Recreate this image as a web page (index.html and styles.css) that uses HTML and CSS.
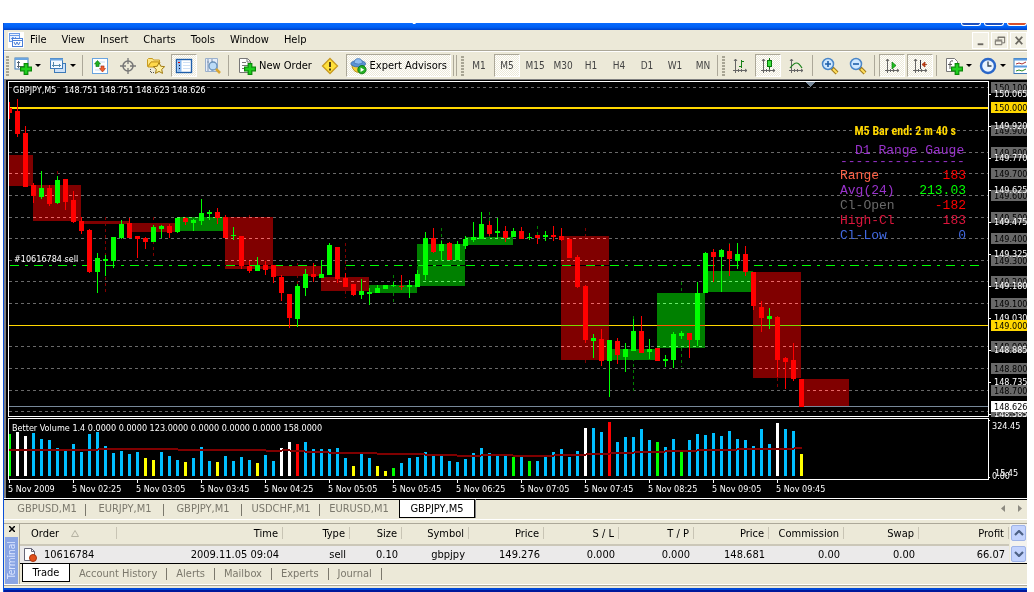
FILE: index.html
```html
<!DOCTYPE html>
<html lang="en">
<head>
<meta charset="utf-8">
<title>GBPJPY,M5</title>
<link rel="stylesheet" href="styles.css">
</head>
<body>
<svg class="defs" aria-hidden="true">
  <symbol id="plus" viewBox="0 0 10 10"><path d="M3.5 .5h3v3h3v3h-3v3h-3v-3h-3v-3h3z" fill="#1fd01f" stroke="#078a07"/></symbol>
  <symbol id="axes" viewBox="0 0 16 16"><path d="M3.5 1v14M1 12.5h14M2 3l1.500-2L5 3M13 11l2 1.500L13 14M6.500 11v3M9.500 11v3" fill="none" stroke="#666"/></symbol>
</svg>
<div class="window">
  <header class="title"><span class="title-text">[GBPJPY,M5]</span><i class="cap"></i><i class="cap"></i><i class="cap cap-close"></i></header>

  <nav class="menu">
    <svg class="menu-logo" viewBox="0 0 16 16"><rect width="16" height="16" fill="#fff"/><rect x="1.500" y="1.500" width="10" height="8" fill="#eaf2ff" stroke="#6a9be8"/><path d="M1 3.500h11M3 7l2-2 1 2 2-2" fill="none" stroke="#6a9be8"/><rect x="4.500" y="6.500" width="10" height="8" fill="#fff" stroke="#4a7fd8"/><path d="M4 8.500h11M6 10l1.500 3L9 10l1.500 3 1.500-3" fill="none" stroke="#4a7fd8"/></svg>
    <button>File</button><button>View</button><button>Insert</button><button>Charts</button><button>Tools</button><button>Window</button><button>Help</button>
    <span class="spacer"></span>
    <button class="mdi" aria-label="Minimize"><svg viewBox="0 0 16 16"><path d="M5 12h6" stroke="#6b6860" stroke-width="2"/></svg></button>
    <button class="mdi" aria-label="Restore"><svg viewBox="0 0 16 16"><path d="M6.500 7V4.500h7v6H11M6 4.500h8M3.500 8.500h7v4h-7zM3 7.500h8" fill="none" stroke="#6b6860"/></svg></button>
    <button class="mdi" aria-label="Close"><svg viewBox="0 0 16 16"><path d="M5 4l7 8M12 4l-7 8" stroke="#6b6860" stroke-width="2"/></svg></button>
  </nav>

  <div class="toolbar">
    <i class="grip"></i>
    <button class="drop" aria-label="New chart"><svg class="icon" viewBox="0 0 18 18"><rect x="1" y="1" width="13" height="11" fill="#fff" stroke="#3d7ab8"/><path d="M1 2h13" stroke="#6aa5e0" stroke-width="2"/><path d="M4.500 4v7M3 9.500h8M3 5.500h3" stroke="#567" fill="none"/><use href="#plus" x="6" y="6" width="12" height="12"/></svg><i class="caret"></i></button>
    <button class="drop profiles" aria-label="Profiles"><svg class="icon" viewBox="0 0 18 18"><rect x="5.500" y="6.500" width="11" height="9" fill="#cfe2f8" stroke="#3d7ab8"/><rect x="1.500" y="1.500" width="12" height="10" fill="#f4f9ff" stroke="#3d7ab8"/><path d="M1 2.500h13" stroke="#6aa5e0" stroke-width="2"/><path d="M4.500 5v5M3 8.500h9M10.500 7v3" stroke="#58a" fill="none"/></svg><i class="caret"></i></button>
    <i class="sep"></i>
    <button class="tool" aria-label="Market watch"><svg class="icon" viewBox="0 0 18 18"><rect x="1.500" y="1.500" width="15" height="15" fill="#fff" stroke="#6aa5e0"/><path d="M4 5h10M4 9h10M4 13h10" stroke="#c9dcf2"/><path d="M6.500 3.500l3 3.500H8v2.500H5V7H3.500z" fill="#20b020" stroke="#087808" stroke-width=".6"/><path d="M11.500 15l-3-3.500H10V9h3v2.500h1.500z" fill="#f06030" stroke="#b03010" stroke-width=".6"/></svg></button>
    <button class="tool" aria-label="Crosshair"><svg class="icon" viewBox="0 0 18 18"><circle cx="9" cy="9" r="5" fill="none" stroke="#777" stroke-width="1.500"/><path d="M9 1v6M9 11v6M1 9h6M11 9h6" stroke="#777" stroke-width="1.300"/></svg></button>
    <button class="tool" aria-label="Navigator"><svg class="icon" viewBox="0 0 18 18"><path d="M.500 9.500v-7l1-1h4l1 1.500h6v2H4z" fill="#ffe680" stroke="#c89b20"/><path d="M1 10l3-5h9l-2 5z" fill="#ffd94a" stroke="#c89b20"/><path d="M3.500 12v3.500H7" stroke="#555" stroke-dasharray="1 1" fill="none"/><path d="M12 5.500l1.700 3.700 3.900.5-2.900 2.700.8 4-3.500-2-3.500 2 .8-4-2.900-2.700 3.900-.5z" fill="#fff0a0" stroke="#a07a10"/></svg></button>
    <button class="tool on" aria-label="Terminal"><svg class="icon" viewBox="0 0 18 18"><rect x="1.500" y="2.500" width="15" height="13" fill="#fff" stroke="#1f5faa" stroke-width="1.400"/><path d="M4.500 3v12" stroke="#8dbcf0" stroke-width="4"/><path d="M8 5.500h7M8 8.500h7M8 11.500h7" stroke="#cfe0f5"/><path d="M4 5.500h1M4 8.500h1M4 11.500h1" stroke="#113"/><path d="M3 5.500h2" stroke="#d00"/></svg></button>
    <button class="tool" aria-label="Strategy tester"><svg class="icon" viewBox="0 0 18 18"><path d="M2.500 1.500h12v13h-12z" fill="#e6eefa" stroke="#9ab0cc"/><path d="M5 2v12M9 2v12M4 5h2M8 6l2-2" stroke="#7d93b0"/><circle cx="10" cy="9" r="4" fill="#bcdcf8" stroke="#6b93bb" stroke-width="1.300"/><path d="M13 12l4 4" stroke="#d8a530" stroke-width="2.500"/></svg></button>
    <i class="sep"></i>
    <button class="labelled"><svg class="icon" viewBox="0 0 18 18"><path d="M1.500 1.500h8l3 3v11h-11z" fill="#fff" stroke="#777"/><path d="M9 1.500V5h3.500M4 5.500h4M4 8.500h6M4 11.500h4" fill="none" stroke="#777"/><use href="#plus" x="6" y="6" width="12" height="12"/></svg>New Order</button>
    <button class="tool" aria-label="Warnings"><svg class="icon" viewBox="0 0 18 18"><path d="M9 1.500l7.500 7.500L9 16.500 1.500 9z" fill="#ffe13a" stroke="#c89a20" stroke-width="1.300"/><path d="M9 5v5M9 11.500v2" stroke="#554010" stroke-width="2"/></svg></button>
    <button class="labelled on experts"><svg class="icon" viewBox="0 0 18 18"><path d="M2 8q1 8 8 8 4 0 5-8z" fill="#f5cd38" stroke="#b08a18"/><ellipse cx="9" cy="6.500" rx="8" ry="3.500" fill="#5b93d3" stroke="#3c6fae"/><path d="M4.500 6q0-5 4.500-5t4.500 5q-4 2-9 0z" fill="#8fbdf0" stroke="#4a7dbb"/><circle cx="13" cy="13" r="4.500" fill="#25b025" stroke="#0b780b"/><path d="M11.500 10.500l4 2.500-4 2.500z" fill="#fff"/></svg>Expert Advisors</button>
    <i class="sep double"></i><i class="grip"></i>
    <button class="tool period">M1</button><button class="tool period on">M5</button><button class="tool period">M15</button><button class="tool period">M30</button><button class="tool period">H1</button><button class="tool period">H4</button><button class="tool period">D1</button><button class="tool period">W1</button><button class="tool period">MN</button>
    <i class="sep near"></i><i class="grip"></i>
    <button class="tool" aria-label="Bar chart"><svg class="icon" viewBox="0 0 16 16"><use href="#axes"/><path d="M9.500 2v8M7 8.500h2M10 3.500h2" stroke="#178017"/></svg></button>
    <button class="tool on" aria-label="Candlesticks"><svg class="icon" viewBox="0 0 16 16"><use href="#axes"/><path d="M9.500 0v11" stroke="#087808"/><rect x="7.500" y="2.500" width="4" height="6" fill="#3ee03e" stroke="#087808"/></svg></button>
    <button class="tool" aria-label="Line chart"><svg class="icon" viewBox="0 0 16 16"><use href="#axes"/><path d="M2 10q4-5 6.500-5T14 10" fill="none" stroke="#178017" stroke-width="1.200"/></svg></button>
    <i class="sep"></i>
    <button class="tool" aria-label="Zoom in"><svg class="icon" viewBox="0 0 18 18"><path d="M11 11l5 5" stroke="#a07a18" stroke-width="4"/><path d="M12 12l4 4" stroke="#ffdf60" stroke-width="2"/><circle cx="7" cy="7" r="5.500" fill="#cfe8ff" stroke="#4a86c8" stroke-width="1.500"/><path d="M4 7h6M7 4v6" stroke="#1f5faa" stroke-width="1.600"/></svg></button>
    <button class="tool" aria-label="Zoom out"><svg class="icon" viewBox="0 0 18 18"><path d="M11 11l5 5" stroke="#a07a18" stroke-width="4"/><path d="M12 12l4 4" stroke="#ffdf60" stroke-width="2"/><circle cx="7" cy="7" r="5.500" fill="#cfe8ff" stroke="#4a86c8" stroke-width="1.500"/><path d="M4 7h6" stroke="#1f5faa" stroke-width="1.600"/></svg></button>
    <i class="sep"></i>
    <button class="tool on" aria-label="Auto scroll"><svg class="icon" viewBox="0 0 16 16"><use href="#axes"/><path d="M8 4l4 3.500L8 11z" fill="#20c020" stroke="#087808" stroke-width=".7"/></svg></button>
    <button class="tool on" aria-label="Chart shift"><svg class="icon" viewBox="0 0 16 16"><use href="#axes"/><path d="M8.500 2v9" stroke="#334"/><path d="M15 6.500h-3M10 6.500l3-2.500v5z" fill="#d04010" stroke="#a03010" stroke-width=".8"/></svg></button>
    <i class="sep"></i>
    <button class="drop end" aria-label="Indicators"><svg class="icon" viewBox="0 0 18 18"><path d="M1.500 1.500h8l3 3v10h-11z" fill="#fff" stroke="#777"/><path d="M8 4q-3-1-3 3v5M3 7.500h4" fill="none" stroke="#555"/><use href="#plus" x="6" y="6" width="12" height="12"/></svg><i class="caret"></i></button>
    <button class="drop end" aria-label="Periodicity"><svg class="icon" viewBox="0 0 18 18"><circle cx="9" cy="9" r="7" fill="#eaf4ff" stroke="#2a67c8" stroke-width="2.400"/><path d="M9 4.500V9h3.500" fill="none" stroke="#345" stroke-width="1.300"/></svg><i class="caret"></i></button>
    <button class="drop end" aria-label="Templates"><svg class="icon" viewBox="0 0 18 18"><rect x="1" y="1.500" width="16" height="15" fill="#fff" stroke="#3d7ab8"/><path d="M1 2.500h16M1 9.500h16" stroke="#5b9be0" stroke-width="2"/><path d="M3 7l3-1 3 1 4-2" fill="none" stroke="#a33"/><path d="M3 14l3-1 3 1 4-2" fill="none" stroke="#2a8a2a"/></svg></button>
  </div>

  <main class="chart">
    <section class="pane price">
      <svg class="plot" id="price-plot"></svg>
      <p class="caption">GBPJPY,M5&nbsp;&nbsp; 148.751 148.751 148.623 148.626</p>
      <p class="order-label">#10616784 sell</p>
      <div class="gauge">
        <p class="countdown">M5 Bar end: 2 m 40 s</p>
        <p class="heading">D1 Range Gauge</p>
        <p class="rule">----------------</p>
        <dl>
          <div><dt class="tomato">Range</dt><dd class="red">183</dd></div>
          <div><dt class="violet">Avg(24)</dt><dd class="lime">213.03</dd></div>
          <div><dt class="dim">Cl-Open</dt><dd class="red">-182</dd></div>
          <div><dt class="crimson">High-Cl</dt><dd class="crimson">183</dd></div>
          <div><dt class="royal">Cl-Low</dt><dd class="royal">0</dd></div>
        </dl>
      </div>
    </section>
    <svg class="scale" id="price-scale"></svg>
    <section class="pane volume">
      <svg class="plot" id="volume-plot"></svg>
      <p class="caption low">Better Volume 1.4 0.0000 0.0000 123.0000 0.0000 0.0000 0.0000 158.0000</p>
    </section>
    <svg class="scale" id="volume-scale"></svg>
    <div class="times" id="times"></div>
  </main>

  <nav class="chart-tabs">
    <button>GBPUSD,M1</button><button>EURJPY,M1</button><button>GBPJPY,M1</button><button>USDCHF,M1</button><button class="last">EURUSD,M1</button><button class="active">GBPJPY,M5</button>
    <span class="spacer"></span>
    <button class="scroll" aria-label="Scroll left"><svg viewBox="0 0 4 7"><path d="M4 0v7L0 3.500z" fill="#8c8a80"/></svg></button>
    <button class="scroll" aria-label="Scroll right"><svg viewBox="0 0 4 7"><path d="M0 0v7l4-3.500z" fill="#8c8a80"/></svg></button>
  </nav>

  <section class="terminal">
    <aside><button class="shut" aria-label="Close terminal"><svg viewBox="0 0 6 6"><path d="M0 0l6 6M6 0L0 6" stroke="#000" stroke-width="1.500"/></svg></button><span class="side-name">Terminal</span></aside>
    <div class="terminal-body">
      <div class="grid">
        <table>
          <colgroup><col class="c-order"><col class="c-time"><col class="c-type"><col class="c-size"><col class="c-type"><col class="c-num"><col class="c-num"><col class="c-num"><col class="c-num"><col class="c-num"><col class="c-num"><col></colgroup>
          <thead><tr><th class="first">Order <svg class="sort" viewBox="0 0 8 7"><path d="M.500 6.500L4 .500l3.500 6z" fill="none" stroke="#b5b2a2"/></svg></th><th>Time</th><th>Type</th><th>Size</th><th>Symbol</th><th>Price</th><th>S / L</th><th>T / P</th><th>Price</th><th>Commission</th><th>Swap</th><th>Profit</th></tr></thead>
          <tbody><tr><td class="first"><svg class="doc" viewBox="0 0 14 15"><path d="M1.500 1.500h7l3 3v9h-10z" fill="#fff" stroke="#667"/><path d="M8.500 1.500v3h3" fill="none" stroke="#667"/><circle cx="10" cy="11" r="3.500" fill="#e2501c" stroke="#a8330c"/></svg>10616784</td><td>2009.11.05 09:04</td><td>sell</td><td>0.10</td><td>gbpjpy</td><td>149.276</td><td>0.000</td><td>0.000</td><td>148.681</td><td>0.00</td><td>0.00</td><td>66.07</td></tr></tbody>
        </table>
        <div class="scrollbar"><button aria-label="Up"><svg viewBox="0 0 10 6"><path d="M1 5l4-4 4 4" fill="none" stroke="#4d6185" stroke-width="2.200"/></svg></button><button aria-label="Down"><svg viewBox="0 0 10 6"><path d="M1 1l4 4 4-4" fill="none" stroke="#4d6185" stroke-width="2.200"/></svg></button></div>
      </div>
      <nav class="terminal-tabs"><button class="active">Trade</button><button>Account History</button><button>Alerts</button><button>Mailbox</button><button>Experts</button><button>Journal</button></nav>
    </div>
  </section>
  <div class="base"></div>
</div>
<script src="chart.js"></script>
</body>
</html>
```
FILE: styles.css
```css
* { box-sizing: border-box; }
body { margin: 0; background: #fff; font: 11px/14px "DejaVu Sans Condensed", "DejaVu Sans", sans-serif; color: #000; }
p, dl, dd { margin: 0; }
button { margin: 0; padding: 0; border: 0; background: none; font: inherit; color: inherit; white-space: nowrap; }
svg { display: block; }
.defs { position: absolute; width: 0; height: 0; }
.window { margin: 23px 7px 0 3px; border-left: 1px solid #0a50d8; background: #ece9d8; overflow: hidden; }
.spacer { flex: 1; }

.title { display: flex; align-items: flex-end; gap: 3px; height: 7px; overflow: hidden; background: linear-gradient(#0a6cff, #0060f4 60%, #0040c8); }
.title-text { flex: 1; padding: 0 0 5px 377px; font-size: 13px; font-weight: bold; line-height: 16px; color: #fff; }
.cap { align-self: flex-start; width: 20px; height: 3px; border: 1px solid #fff; border-top: 0; border-radius: 0 0 3px 3px; background: #1c50c0; }
.cap-close { background: #d8502c; }

.menu { display: flex; align-items: center; height: 21px; padding-left: 4px; border-bottom: 1px solid #aca899; }
.menu-logo { width: 16px; height: 16px; margin-right: 6px; }
.menu button { margin-right: 15px; }
.menu .mdi { width: 17px; height: 17px; margin: 0 0 0 2px; border: 1px solid #fff; background: #f2f0e4; }
.mdi svg { width: 15px; height: 15px; }

.toolbar { display: flex; align-items: center; height: 28px; padding-left: 2px; border-top: 1px solid #fff; overflow: hidden; }
.toolbar > * { flex: none; }
.grip { width: 3px; height: 20px; background: repeating-linear-gradient(#a8a594 0 2px, #ece9d8 2px 3px); }
.icon { width: 18px; height: 18px; }
.tool { display: flex; align-items: center; justify-content: center; width: 26px; height: 23px; margin: 0 1px; }
.tool .icon[viewBox="0 0 16 16"] { width: 16px; height: 16px; }
.on { border: 1px solid #fff; border-top-color: #aca899; border-left-color: #aca899; background: repeating-conic-gradient(#fff 0 25%, #ece9d8 0 50%) 0 0 / 2px 2px; }
.period { color: #444; font-size: 10px; }
.sep { width: 2px; height: 21px; margin: 0 2px; border-left: 1px solid #aca899; }
.sep.double { width: 4px; border-right: 1px solid #aca899; margin: 0 4px 0 2px; }
.sep.near { margin: 0 3px 0 0; }
.grip + .tool { margin-left: 2px; }
.drop { display: flex; align-items: center; gap: 3px; width: 35px; padding-left: 5px; }
.drop.profiles { width: 36px; }
.drop.end { width: 34px; padding-left: 5px; }
.caret { border: 3px solid transparent; border-top-color: #000; border-bottom: 0; }
.labelled { display: flex; align-items: center; gap: 3px; height: 23px; padding: 0 3px 0 6px; width: 84px; }
.experts { width: 105px; margin-left: 2px; padding: 0 3px; }

.chart { display: grid; grid-template-columns: minmax(0, 1fr) 38px; grid-template-rows: 336px 62px 17px; row-gap: 1px; padding: 1px 0 0 2px; border: solid #808080; border-width: 1px 0 0 2px; background: #000; color: #fff; font-size: 9px; line-height: 11px; }
.pane { position: relative; border: 1px solid #fff; overflow: hidden; }
.plot, .scale { width: 100%; height: 100%; }
.scale { overflow: hidden; }
.scale text { font-size: 9px; }
.caption { position: absolute; left: 4px; top: 3px; }
.caption.low { top: 4px; left: 3px; }
.order-label { position: absolute; left: 5px; top: 172px; }
.gauge { position: absolute; top: 41px; right: 20px; width: 128px; font: 13px/15px "Liberation Mono", monospace; }
.countdown { padding-right: 12px; text-align: right; font: bold 12px/16px "Impact", "Liberation Sans Narrow", "Roboto Condensed", sans-serif; color: #ffd700; }
.heading { margin-top: 4px; padding-left: 15px; color: #9932cc; white-space: nowrap; }
.rule { height: 10px; line-height: 8px; color: #9932cc; }
.gauge dl div { display: flex; justify-content: space-between; padding-right: 2px; }
.tomato { color: #ff6347; } .violet { color: #9932cc; } .dim { color: #696969; } .crimson { color: #dc143c; } .royal { color: #4169e1; }
.red { color: #f00; } .lime { color: #0f0; }
.times { grid-column: 1 / -1; display: flex; overflow: hidden; white-space: nowrap; margin-top: -1px; }
.times span { flex: none; width: 64px; }
.times span::before { content: ""; display: block; width: 1px; height: 3px; margin: 0 0 1px 1px; background: #fff; }

.chart-tabs { display: flex; align-items: flex-start; height: 22px; border-top: 1px solid #fff; border-bottom: 1px solid #fff; box-shadow: inset 0 1px #000; padding-left: 4px; color: #7b786c; font-size: 11px; }
.chart-tabs button { width: 78px; height: 19px; background: linear-gradient(#7b786c, #7b786c) right 5px / 1px 12px no-repeat; }
.chart-tabs button.last { background: none; width: 78px; }
.chart-tabs button.active { width: 76px; height: 19px; margin-left: 1px; border: 1px solid #000; background: #fff; color: #000; box-shadow: 1px 0 #808080; }
.chart-tabs button.scroll { width: 17px; padding-left: 8px; background: none; }
.scroll svg { width: 4px; height: 7px; }

.terminal { display: flex; margin-top: 3px; border-top: 1px solid #aca899; height: 61px; }
.terminal aside { width: 15px; display: flex; flex-direction: column; align-items: center; gap: 5px; padding-top: 2px; }
.shut svg { width: 6px; height: 6px; }
.side-name { width: 13px; height: 47px; background: #8aa5e4; color: #dbe5ff; writing-mode: vertical-rl; transform: rotate(180deg); text-align: center; line-height: 13px; font-size: 10px; }
.terminal-body { flex: 1; min-width: 0; border-left: 1px solid #aca899; }
.grid { display: flex; border-bottom: 1px solid #000; }
table { flex: 1; width: 100%; min-width: 0; table-layout: fixed; border-collapse: collapse; }
.c-order { width: 97px; } .c-time { width: 166px; } .c-type { width: 67px; } .c-size { width: 52px; } .c-num { width: 75px; }
th, td { padding: 0 4px 0 0; text-align: right; white-space: nowrap; font-weight: normal; }
th { height: 21px; padding-right: 5px; border-bottom: 2px solid #cbc7b8; background: linear-gradient(#c8c4b4, #c8c4b4) right 3px / 1px 12px no-repeat; }
td { height: 18px; background: #ebeaea; }
.first { text-align: left; padding-left: 11px; }
td.first { padding-left: 3px; }
.sort { display: inline-block; width: 8px; height: 7px; margin-left: 9px; }
.doc { display: inline-block; width: 14px; height: 15px; margin-right: 7px; vertical-align: middle; }
.scrollbar { width: 17px; display: flex; flex-direction: column; justify-content: space-between; background: #f4f3ee; padding: 1px; margin-left: 1px; }
.scrollbar button { display: flex; align-items: center; justify-content: center; height: 16px; border: 1px solid #9fb4e8; border-radius: 2px; background: #c3d3fd; }
.scrollbar svg { width: 10px; height: 6px; }
.terminal-tabs { display: flex; align-items: center; height: 19px; padding-left: 2px; color: #7b786c; }
.terminal-tabs button { padding: 0 9px; height: 12px; line-height: 12px; border-right: 1px solid #7b786c; }
.terminal-tabs .active { align-self: flex-start; width: 48px; height: 18px; line-height: 17px; padding: 0; background: #fff; color: #000; border: 1px solid #000; border-top: 0; }
.base { height: 8px; border-top: 1px solid #fff; background: linear-gradient(#aca899 0 1px, #ece9d8 1px 3px, #0048d8 3px 5px, #00189c 5px); }
```
FILE: chart.js
```js
const NS = "http://www.w3.org/2000/svg";
function add(parent, tag, attrs, text) {
  const el = document.createElementNS(NS, tag);
  for (const k in attrs) el.setAttribute(k, attrs[k]);
  if (text !== undefined) el.textContent = text;
  parent.appendChild(el);
  return el;
}
const rect = (p, x, y, w, h, fill, extra) => add(p, "rect", { x, y, width: w, height: h, fill, ...extra });

const UP = "#00ff00", DOWN = "#ff0000";

// direction, high, body top, body bottom, low
const candles = `
r102,108,113,119 r99,111,134,137 r126,133,187,187 r183,185,196,203 g171,188,197,199
r185,188,204,206 g176,180,203,204 r179,179,202,210 r191,200,222,223 r217,221,231,234
r229,230,272,273 g253,258,272,293 g255,259,261,276 g237,237,261,268 g220,224,238,239
r218,223,238,238 r236,236,239,258 r237,238,242,249 g225,227,242,242 g225,226,229,238
r224,226,233,238 g218,218,232,233 r217,218,222,225 g219,220,223,231 g199,213,221,225
g210,212,214,220 r208,212,218,224 r215,217,238,238 g227,235,236,240 r236,236,266,269
r261,266,271,273 g257,265,271,271 r261,265,270,275 r265,265,277,283 r275,277,293,301
r294,294,318,328 g284,286,319,327 g269,274,288,296 r263,274,277,282 g260,274,278,278
g243,245,275,275 r247,247,279,283 r273,278,287,287 r284,284,295,296 g279,291,295,299
g288,292,294,305 g285,288,293,293 g285,285,289,289 g282,285,286,287 r275,286,287,290
g280,285,287,298 g270,274,287,287 g232,238,275,280 r228,238,252,253 g241,244,251,261
r242,243,260,260 g241,244,260,260 g236,239,246,249 g222,237,240,242 g212,224,239,239
r221,225,234,236 g218,231,233,238 r226,231,238,242 g228,231,237,237 r227,231,239,239
g233,237,238,240 r235,235,238,244 g231,235,237,241 r226,235,237,241 r228,236,240,241
r238,239,258,258 r255,257,287,288 r285,286,340,343 g334,338,341,358 r329,339,361,366
g340,340,361,397 r338,341,355,364 g343,349,357,372 g319,331,351,351 r316,331,353,353
g339,349,352,359 r348,348,361,361 g355,359,361,367 g332,334,360,368 g331,333,336,339
r333,333,340,358 g282,293,340,346 g252,253,293,293 r249,252,257,282 g249,250,257,292
r244,251,259,276 g243,254,261,269 r246,254,272,276 r272,272,306,310 r301,307,318,332
g308,316,319,329 r316,317,360,377 r357,358,362,389 r343,360,379,381 r379,379,407,407`
  .trim().split(/\s+/).map(s => [s[0], ...s.slice(1).split(",").map(Number)]);

// 30-minute blocks: x, top, bottom, direction
const blocks = [
  [-15, 155, 186, "r"], [33, 185, 221, "r"], [81, 221, 224, "r"], [129, 223, 232, "r"], [177, 217, 231, "g"],
  [225, 217, 269, "r"], [273, 266, 276, "r"], [321, 277, 291, "r"], [369, 285, 293, "g"], [417, 244, 286, "g"],
  [465, 237, 245, "g"], [561, 236, 360, "r"], [609, 349, 360, "g"], [657, 293, 348, "g"], [705, 271, 292, "g"],
  [753, 272, 378, "r"], [801, 379, 406, "r"]];
const blockWicks = [
  [57, 171, 180, "r"], [105, 217, 292, "r"], [153, 217, 257, "r"], [249, 215, 217, "r"], [297, 263, 284, "r"],
  [345, 243, 298, "r"], [393, 275, 303, "g"], [441, 228, 244, "g"], [489, 212, 248, "g"], [537, 226, 240, "g"],
  [585, 228, 236, "r"], [585, 360, 363, "r"], [633, 316, 393, "g"], [681, 282, 293, "g"], [681, 348, 367, "g"],
  [729, 243, 271, "g"], [777, 378, 387, "r"]];
const levels = [[87, "150.100"], [130, "149.900"], [152, "149.800"], [173, "149.700"], [195, "149.600"], [217, "149.500"],
  [238, "149.400"], [260, "149.300"], [281, "149.200"], [303, "149.100"], [346, "148.900"], [368, "148.800"], [390, "148.700"], [411, "148.600"]];
const darkOf = d => d === "r" ? "#800000" : "#008000";

const g = add(document.getElementById("price-plot"), "g", { transform: "translate(-9,-82)", "shape-rendering": "crispEdges" });
rect(g, 9, 107, "100%", 2, "#ffd700");
rect(g, 9, 325, "100%", 1, "#ffd700");
for (const [x, a, b, d] of blocks) rect(g, x, a, 48, b - a, darkOf(d), { style: "mix-blend-mode:difference" });
for (const [y] of levels) {
  const row = add(g, "svg", { x: 9, y, width: "100%", height: 1, style: "mix-blend-mode:plus-lighter" });
  add(row, "line", { x1: 0, x2: "100%", y1: 0.5, y2: 0.5, stroke: "#696969", "stroke-dasharray": "3 3" });
}
for (const [x, a, b, d] of blockWicks) add(g, "line", { x1: x + 0.5, x2: x + 0.5, y1: a, y2: b, stroke: darkOf(d), "stroke-dasharray": "3 3" });
rect(g, 9, 265, "100%", 1, "#000");
add(g, "line", { x1: 10, x2: "100%", y1: 265.5, y2: 265.5, stroke: UP, "stroke-dasharray": "9 6 3 6" });
rect(g, 9, 406, "100%", 1, "#778899");
candles.forEach(([d, hi, top, bottom, lo], i) => {
  const c = d === "r" ? DOWN : UP;
  rect(g, 9 + 8 * i, hi, 1, lo - hi, c);
  rect(g, 7 + 8 * i, top, 5, bottom - top, c);
});
add(g, "path", { d: "M806 82h9l-4.500 5z", fill: "#778899" });

const scale = add(document.getElementById("price-scale"), "g", { transform: "translate(-989,-81)" });
function tag(y, text, box, ink) {
  if (box) rect(scale, 991, y - 5, 36, 11, box);
  add(scale, "text", { x: 994, y: y + 4, fill: ink }, text);
}
for (const [y, t] of levels) tag(y, t, "#696969", "#000");
["150.065", "149.920", "149.770", "149.625", "149.475", "149.325", "149.180", "149.030", "148.885", "148.735", "148.585"].forEach((t, i) => {
  rect(scale, 989, 94 + 32 * i, 2, 1, "#fff");
  tag(93 + 32 * i, t, null, "#fff");
});
tag(107, "150.000", "#ffd700", "#000");
tag(325, "149.000", "#ffd700", "#000");
tag(406, "148.626", "#fff", "#000");

// colour, top
const volumes = `
g434 w432 w436 b433 b439 b440 b448 b451 b444 b452 b434 b432 b446 b453 b451 b454 b452 y458 y460 b452
b456 b460 y462 b458 b447 b461 y462 b456 b461 b457 b460 y463 b455 b461 w448 w442 r444 b442 b449 b449
b449 b448 b458 y466 b454 b458 y466 y471 g468 b463 b458 b457 b452 b455 b455 b461 b462 b459 b453 b448
b453 b456 b456 g457 b457 g461 b461 b457 b452 b449 b457 b451 w428 b428 b432 r422 b442 b437 b437 b429
b440 g442 b447 b439 g452 b440 b434 b435 b433 b436 b431 b439 b440 b446 b429 b444 w423 b429 b431 y454`.trim().split(/\s+/);
const volColor = { g: UP, w: "#fff", b: "#00bfff", y: "#ffff00", r: DOWN };
const v = add(document.getElementById("volume-plot"), "g", { transform: "translate(-9,-419)", "shape-rendering": "crispEdges" });
volumes.forEach((s, i) => { const y = Number(s.slice(1)); rect(v, 8 + 8 * i, y, 3, 476 - y, volColor[s[0]]); });
// moving average: end x, y
let from = 9;
for (const [to, y] of [[98, 450], [178, 449], [266, 450], [282, 451], [290, 450], [305, 451], [329, 452], [377, 453], [425, 454],
  [457, 455], [481, 456], [513, 455], [554, 456], [586, 455], [610, 454], [634, 453], [665, 452], [697, 451], [737, 450], [794, 449], [802, 448]]) {
  rect(v, from, y - 1, to - from, 2, "#800000");
  from = to;
}

const vs = add(document.getElementById("volume-scale"), "g", { transform: "translate(-989,-418)", fill: "#fff" });
rect(vs, 989, 420, 1, 1, "#fff");
rect(vs, 989, 477, 1, 1, "#fff");
add(vs, "text", { x: 992, y: 429 }, "324.45");
add(vs, "text", { x: 995, y: 476 }, "15.45");
add(vs, "text", { x: 992, y: 479 }, "0.00");

for (const t of ["2009", "02:25", "03:05", "03:45", "04:25", "05:05", "05:45", "06:25", "07:05", "07:45", "08:25", "09:05", "09:45"]) {
  const s = document.createElement("span");
  s.textContent = "5 Nov " + t;
  document.getElementById("times").appendChild(s);
}
```
